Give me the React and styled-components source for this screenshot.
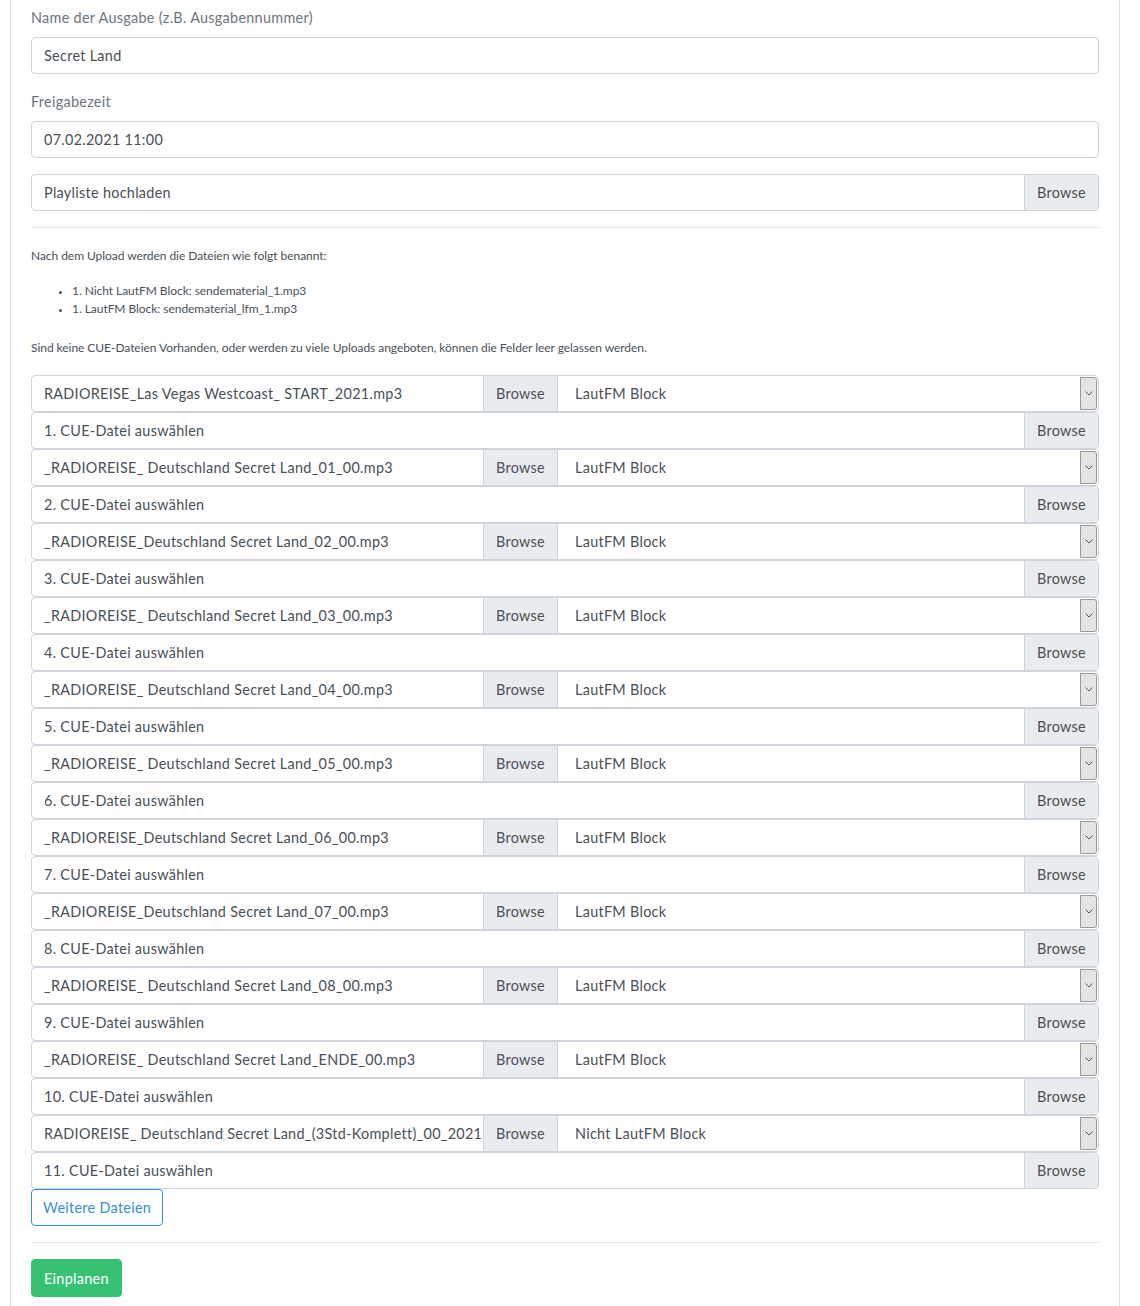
import React from 'react'
import styled, { createGlobalStyle } from 'styled-components'

const GlobalStyle = createGlobalStyle`
  * { box-sizing: border-box; }
  body {
    margin: 0;
    background: #fff;
    font-family: Lato, "Noto Sans", sans-serif;
    letter-spacing: 0.3px;
    color: #495057;
  }
`

// dateien fuer die sendung
const files = [
  { name: 'RADIOREISE_Las Vegas Westcoast_ START_2021.mp3', block: 'LautFM Block' },
  { name: '_RADIOREISE_ Deutschland Secret Land_01_00.mp3', block: 'LautFM Block' },
  { name: '_RADIOREISE_Deutschland Secret Land_02_00.mp3', block: 'LautFM Block' },
  { name: '_RADIOREISE_ Deutschland Secret Land_03_00.mp3', block: 'LautFM Block' },
  { name: '_RADIOREISE_ Deutschland Secret Land_04_00.mp3', block: 'LautFM Block' },
  { name: '_RADIOREISE_ Deutschland Secret Land_05_00.mp3', block: 'LautFM Block' },
  { name: '_RADIOREISE_Deutschland Secret Land_06_00.mp3', block: 'LautFM Block' },
  { name: '_RADIOREISE_Deutschland Secret Land_07_00.mp3', block: 'LautFM Block' },
  { name: '_RADIOREISE_ Deutschland Secret Land_08_00.mp3', block: 'LautFM Block' },
  { name: '_RADIOREISE_ Deutschland Secret Land_ENDE_00.mp3', block: 'LautFM Block' },
  { name: 'RADIOREISE_ Deutschland Secret Land_(3Std-Komplett)_00_2021.mp3', block: 'Nicht LautFM Block' },
]

function App() {
  return (
    <>
      <GlobalStyle />
      <Card>
        <FormGroup>
          <Label>Name der Ausgabe (z.B. Ausgabennummer)</Label>
          <Input>Secret Land</Input>
        </FormGroup>
        <FormGroup>
          <Label>Freigabezeit</Label>
          <Input>07.02.2021 11:00</Input>
        </FormGroup>
        <FormGroup>
          <FileBox $full>
            <FileName>Playliste hochladen</FileName>
            <Browse $last>Browse</Browse>
          </FileBox>
        </FormGroup>

        <Divider />

        <Note>Nach dem Upload werden die Dateien wie folgt benannt:</Note>
        <NoteList>
          <li>1. Nicht LautFM Block: sendematerial_1.mp3</li>
          <li>1. LautFM Block: sendematerial_lfm_1.mp3</li>
        </NoteList>
        <Note $last>
          Sind keine CUE-Dateien Vorhanden, oder werden zu viele Uploads angeboten, können die Felder leer gelassen werden.
        </Note>

        {files.map((f, i) => (
          <React.Fragment key={i}>
            <Row>
              <FileBox>
                <FileName>{f.name}</FileName>
                <Browse>Browse</Browse>
              </FileBox>
              <Select>
                <SelectText>{f.block}</SelectText>
                <Arrow>
                  <svg width="8" height="5" viewBox="0 0 8 5">
                    <path d="M0.5 0.5 L4 4 L7.5 0.5" fill="none" stroke="#555" strokeWidth="1" />
                  </svg>
                </Arrow>
              </Select>
            </Row>
            <Row>
              <FileBox $full>
                <FileName>{i + 1}. CUE-Datei auswählen</FileName>
                <Browse $last>Browse</Browse>
              </FileBox>
            </Row>
          </React.Fragment>
        ))}

        <OutlineButton>Weitere Dateien</OutlineButton>
        <Divider $bottom />
        <SuccessButton>Einplanen</SuccessButton>
      </Card>
    </>
  )
}

export default App

const Card = styled.div`
  margin-left: 10px;
  width: 1110px;
  min-height: 1306px;
  padding: 6px 20px 0;
  border-left: 1px solid #dcdcdc;
  border-right: 1px solid #dcdcdc;
`

const FormGroup = styled.div`
  margin-bottom: 16px;
`

const Label = styled.div`
  font-size: 14.4px;
  line-height: 23px;
  color: #6c757d;
  margin-bottom: 8px;
`

const Input = styled.div`
  height: 37px;
  border: 1px solid #ced4da;
  border-radius: 4px;
  padding: 0 12px;
  font-size: 14.4px;
  line-height: 35px;
  color: #495057;
`

const FileBox = styled.div`
  display: flex;
  height: 37px;
  flex: ${p => (p.$full ? '1' : '0 0 527px')};
  border: 1px solid #ced4da;
  border-radius: ${p => (p.$full ? '4px' : '4px 0 0 4px')};
  overflow: hidden;
`

const FileName = styled.div`
  flex: 1;
  min-width: 0;
  padding: 0 12px;
  font-size: 14.4px;
  line-height: 35px;
  white-space: nowrap;
  overflow: hidden;
  color: #495057;
`

const Browse = styled.div`
  flex: none;
  padding: 0 12px;
  background: #e9ecef;
  border-left: 1px solid #ced4da;
  font-size: 14.4px;
  line-height: 35px;
  color: #495057;
  border-radius: ${p => (p.$last ? '0 3px 3px 0' : '0')};
`

const Divider = styled.hr`
  border: 0;
  border-top: 1px solid rgba(0, 0, 0, 0.1);
  margin: ${p => (p.$bottom ? '16px 0' : '0 0 19px')};
`

const Note = styled.p`
  margin: 0 0 ${p => (p.$last ? '18px' : '17px')};
  font-size: 12px;
  line-height: 18px;
  letter-spacing: -0.05px;
  color: #495057;
`

const NoteList = styled.ul`
  margin: 0 0 21px;
  padding-left: 41px;
  font-size: 12px;
  line-height: 18px;
  letter-spacing: -0.05px;
  color: #495057;

  li::marker {
    font-size: 10px;
  }
`

const Row = styled.div`
  display: flex;
  height: 37px;
`

const Select = styled.div`
  flex: 1;
  display: flex;
  align-items: stretch;
  margin-left: -1px;
  border: 1px solid #ced4da;
  border-radius: 0 4px 4px 0;
  padding: 1px;
`

const SelectText = styled.div`
  flex: 1;
  padding: 0 16px;
  font-size: 14.4px;
  line-height: 33px;
  color: #495057;
`

const Arrow = styled.span`
  width: 17px;
  display: flex;
  align-items: center;
  justify-content: center;
  background: #e4e4e4;
  border: 1px solid #9a9a9a;
  border-radius: 0 3px 3px 0;
`

const OutlineButton = styled.button`
  display: block;
  height: 37px;
  padding: 0 11px;
  border: 1px solid #3490dc;
  border-radius: 4px;
  background: #fff;
  color: #3490dc;
  font-family: inherit;
  letter-spacing: inherit;
  font-size: 14.4px;
`

const SuccessButton = styled.button`
  display: block;
  height: 38px;
  padding: 0 12px;
  border: 1px solid #38c172;
  border-radius: 4px;
  background: #38c172;
  color: #fff;
  font-family: inherit;
  letter-spacing: inherit;
  font-size: 14.4px;
`
